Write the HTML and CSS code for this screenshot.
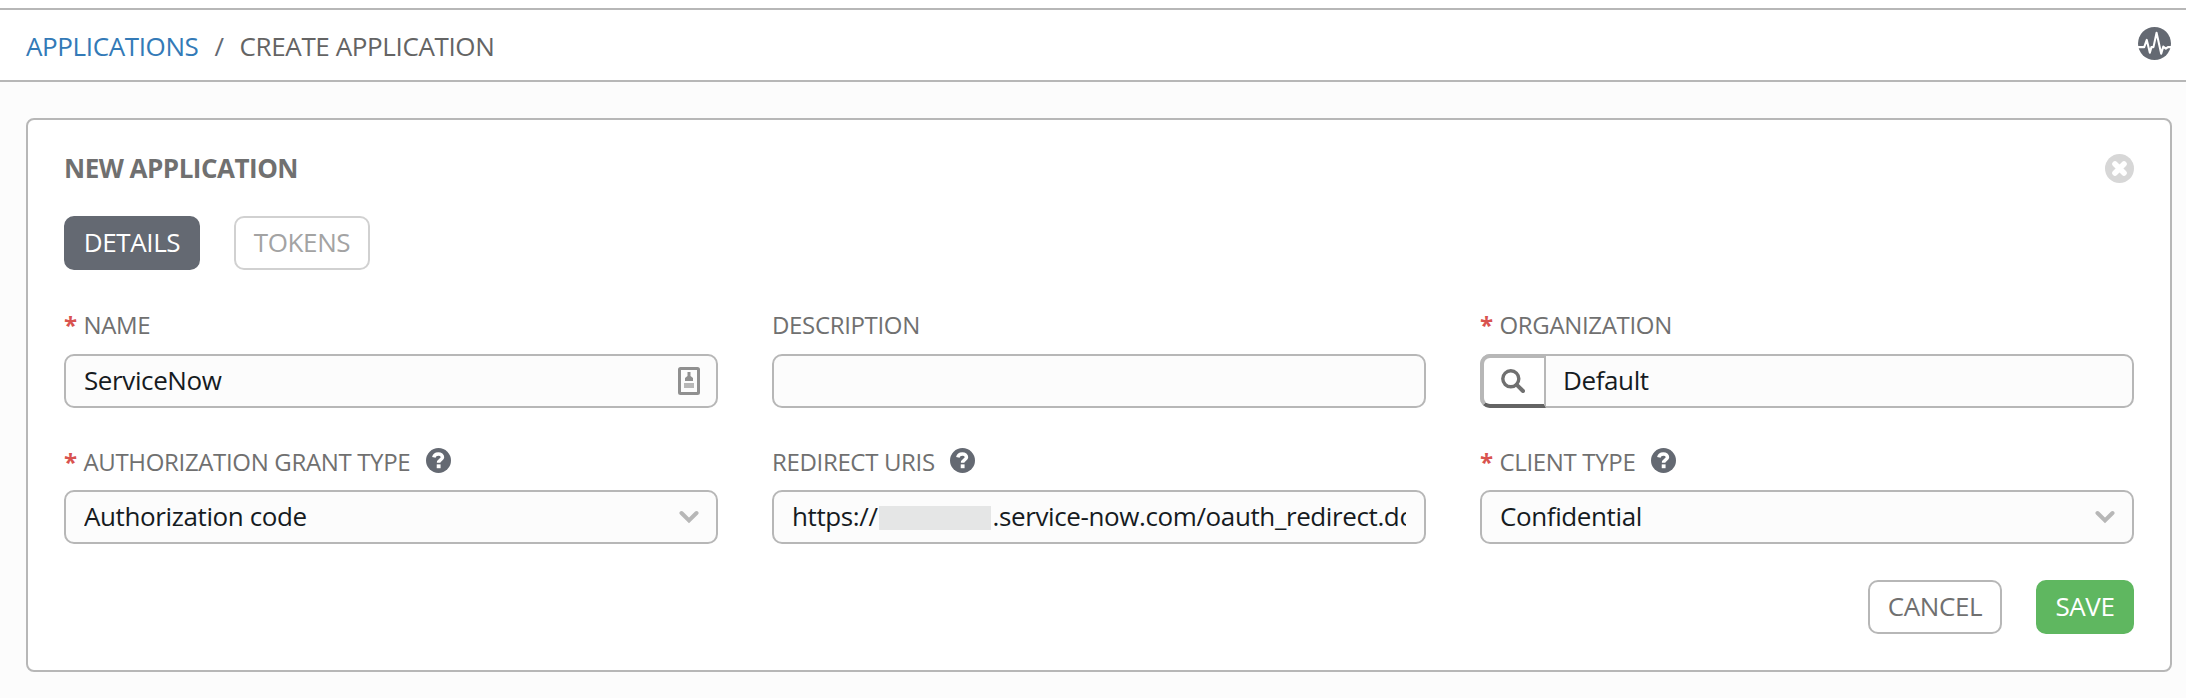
FILE: index.html
```html
<!DOCTYPE html>
<html lang="en">
<head>
<meta charset="utf-8">
<title>Create Application</title>
<link rel="stylesheet" href="styles.css">
</head>
<body>
<svg class="sprite" aria-hidden="true">
  <symbol id="help" viewBox="0 0 24 24">
    <circle cx="12" cy="12" r="12" fill="#646972"/>
    <path d="M7.500 9C8 6.600 9.600 5.700 11.800 5.700c2.400 0 4 1.300 4 3.100 0 2.700-3.700 2.600-3.700 5.400" fill="none" stroke="#fff" stroke-width="3.400"/>
    <rect x="10.300" y="15.700" width="3.700" height="3.700" fill="#fff"/>
  </symbol>
  <symbol id="chevron" viewBox="0 0 20 14">
    <path d="M2.500 3 10 10.500 17.500 3" fill="none" stroke="#b7b7b7" stroke-width="4" stroke-linecap="round"/>
  </symbol>
</svg>
<header class="header">
  <nav class="crumbs"><a class="crumb-link">APPLICATIONS</a><span class="slash">/</span><span class="crumb">CREATE APPLICATION</span></nav>
  <svg class="activity" viewBox="0 0 32 32">
    <circle cx="16" cy="16" r="16" fill="#646972"/>
    <path d="M0 19.500H6L8.500 12.500 11.500 25 13 19.500H15L18 5.500 22.500 26 24.500 19 27 21 29 19.500H32" fill="none" stroke="#fff" stroke-width="2" stroke-linejoin="round"/>
  </svg>
</header>
<main class="panel">
  <div class="panel-head">
    <h1 class="title">NEW APPLICATION</h1>
    <svg class="close" viewBox="0 0 29 29"><circle cx="14.500" cy="14.500" r="14.500" fill="#d7d7d7"/><path d="M10 10 19 19M19 10 10 19" stroke="#fff" stroke-width="5.600" stroke-linecap="round"/></svg>
  </div>
  <div class="tabs"><button class="btn tab-active">DETAILS</button><button class="btn tab">TOKENS</button></div>
  <form class="form">
    <div class="field">
      <div class="label label-top"><span class="req">*</span>NAME</div>
      <div class="input"><span class="value">ServiceNow</span>
        <svg class="card-icon" viewBox="0 0 24 30"><rect x="2.500" y="2.500" width="19" height="25" rx="1" fill="none" stroke="#909090" stroke-width="3"/><path d="M10.500 6h3v4l2.500 2v3H8v-3l2.500-2z" fill="#909090"/><rect x="7" y="17" width="10" height="5" fill="#b8b8b8"/></svg>
      </div>
    </div>
    <div class="field">
      <div class="label label-top">DESCRIPTION</div>
      <div class="input"></div>
    </div>
    <div class="field">
      <div class="label label-top"><span class="req">*</span>ORGANIZATION</div>
      <div class="input lookup"><span class="lookup-btn"><svg class="search" viewBox="0 0 24 24"><circle cx="9.800" cy="9.800" r="8" fill="none" stroke="#707070" stroke-width="3.400"/><path d="M15.800 15.800 22 22" stroke="#707070" stroke-width="4" stroke-linecap="round"/></svg></span><span class="value">Default</span></div>
    </div>
    <div class="field">
      <div class="label"><span class="req">*</span>AUTHORIZATION GRANT TYPE<svg class="help"><use href="#help"/></svg></div>
      <div class="input"><span class="value">Authorization code</span><svg class="chevron"><use href="#chevron"/></svg></div>
    </div>
    <div class="field">
      <div class="label">REDIRECT URIS<svg class="help"><use href="#help"/></svg></div>
      <div class="input"><span class="value">https://<span class="redacted"></span>.service-now.com/oauth_redirect.do</span></div>
    </div>
    <div class="field">
      <div class="label"><span class="req">*</span>CLIENT TYPE<svg class="help"><use href="#help"/></svg></div>
      <div class="input"><span class="value">Confidential</span><svg class="chevron"><use href="#chevron"/></svg></div>
    </div>
  </form>
  <div class="actions"><button class="btn cancel">CANCEL</button><button class="btn save">SAVE</button></div>
</main>
</body>
</html>
```
FILE: styles.css
```css
* { box-sizing: border-box; }
body {
  margin: 0;
  padding-top: 8px;
  height: 698px;
  overflow: hidden;
  background: linear-gradient(#fff 8px, #fcfcfc 8px);
  font-family: "Open Sans", sans-serif;
  font-size: 26px;
  letter-spacing: -0.38px;
  color: #707070;
}
.sprite { display: none; }
.header {
  display: flex;
  justify-content: space-between;
  align-items: center;
  height: 74px;
  padding: 0 15px 0 26px;
  background: #fff;
  border-top: 2px solid #b7b7b7;
  border-bottom: 2px solid #b7b7b7;
}
.crumbs { display: flex; line-height: 36px; padding-top: 2px; }
.crumb-link { color: #337ab7; }
.slash { margin: 0 16px; color: #646972; }
.crumb { color: #646464; }
.activity { width: 33px; height: 33px; margin-bottom: 3px; }
.panel {
  margin: 36px 14px 0 26px;
  height: 554px;
  padding: 32px 36px;
  background: #fff;
  border: 2px solid #b7b7b7;
  border-radius: 8px;
}
.panel-head { display: flex; justify-content: space-between; align-items: center; height: 32px; }
.title { margin: 0; font-size: 26px; line-height: 32px; font-weight: 700; letter-spacing: -0.5px; color: #707070; }
.close { width: 29px; height: 29px; }
.tabs { display: flex; gap: 34px; margin-top: 32px; }
.btn {
  height: 54px;
  padding: 0 0 2px;
  border: 2px solid #b7b7b7;
  border-radius: 10px;
  background: #fff;
  font: 26px "Open Sans", sans-serif;
  letter-spacing: -0.38px;
  color: #707070;
}
.tab-active { width: 136px; background: #646972; border-color: #646972; color: #fff; }
.tab { width: 136px; border-color: #d1d1d1; color: #a3a3a3; }
.form { display: grid; grid-template-columns: repeat(3, 654px); column-gap: 54px; row-gap: 36px; margin-top: 38px; }
.label { display: flex; align-items: center; height: 34px; margin-bottom: 12px; padding-top: 1px; font-size: 24px; letter-spacing: -0.34px; white-space: pre; }
.label-top { padding: 0 0 2px; }
.req { width: 19.5px; color: #d9534f; font-weight: 700; }
.help { width: 25px; height: 25px; margin: 0 0 2px 15.5px; }
.input {
  display: flex;
  align-items: center;
  justify-content: space-between;
  height: 54px;
  padding: 0 18px;
  background: #fcfcfc;
  border: 2px solid #b7b7b7;
  border-radius: 10px;
  color: #161b1f;
}
.value { overflow: hidden; white-space: nowrap; margin-top: -2px; letter-spacing: -0.39px; }
.redacted { display: inline-block; width: 112px; height: 24px; margin: 0 2px 0 1px; vertical-align: -4px; background: #e5e6e6; }
.card-icon { width: 24px; height: 30px; margin-right: -3px; }
.chevron { width: 20px; height: 14px; margin-right: -1px; }
.lookup { padding: 0; justify-content: flex-start; gap: 17px; }
.lookup-btn {
  display: flex;
  align-items: center;
  justify-content: center;
  width: 66px;
  height: 54px;
  margin: -2px 0 -2px -2px;
  background: #fff;
  border: 4px solid #b7b7b7;
  border-right-width: 2px;
  border-bottom-color: #646464;
  border-radius: 10px 0 0 10px;
}
.search { width: 24px; height: 24px; margin-right: 2px; }
.actions { display: flex; justify-content: flex-end; gap: 34px; margin-top: 36px; }
.cancel { width: 134px; }
.save { width: 98px; background: #5fb760; border-color: #5fb760; color: #fff; }
```
